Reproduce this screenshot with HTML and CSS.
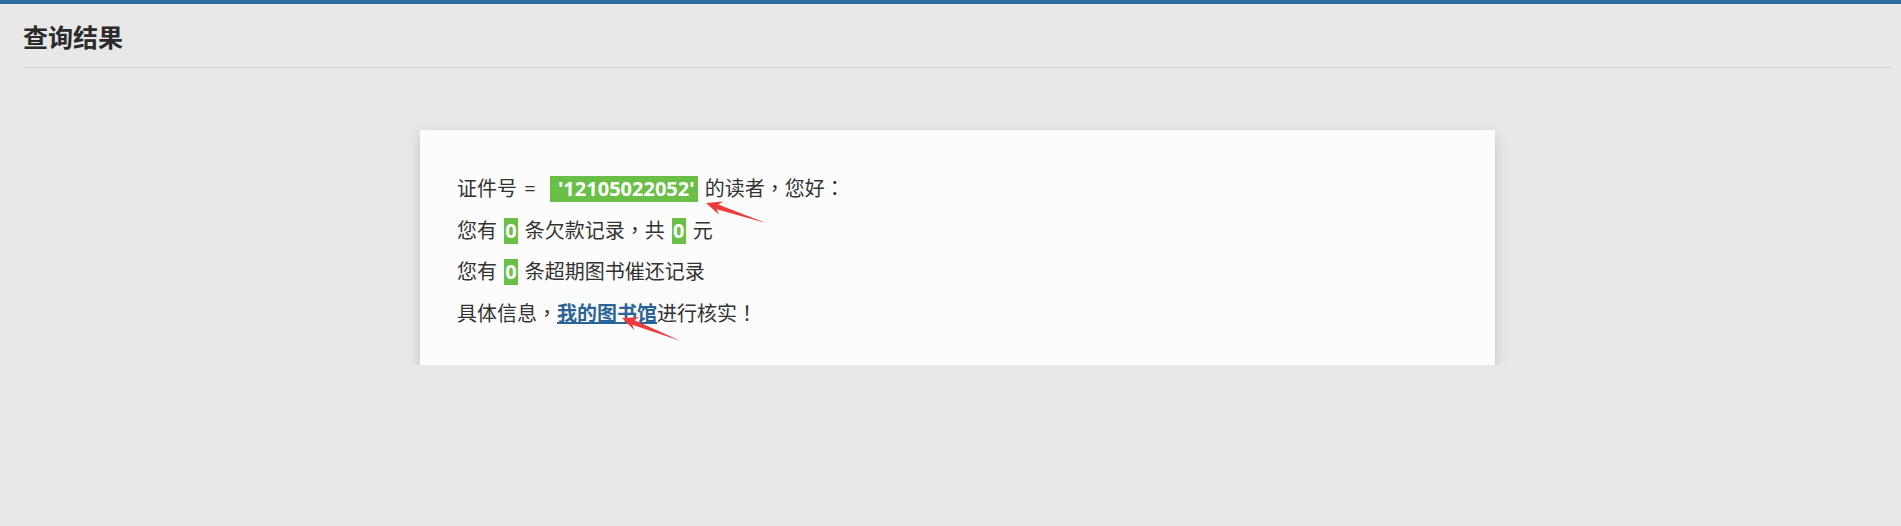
FILE: index.html
```html
<!DOCTYPE html>
<html lang="zh-CN">
<head>
<meta charset="utf-8" />
<title>查询结果</title>
<link rel="stylesheet" href="styles.css">
</head>
<body>
<div class="page">
	<div class="title">查询结果</div>

	<div class="result">
		<div class="line">证件号 = &nbsp;<span class="num id">'12105022052'</span> 的读者<span class="p" lang="zh-TW">，</span>您好<span class="p" lang="zh-TW">：</span></div>
		<div class="line">您有 <span class="num">0</span> 条欠款记录<span class="p" lang="zh-TW">，</span>共 <span class="num">0</span> 元</div>
		<div class="line">您有 <span class="num">0</span> 条超期图书催还记录</div>
		<div class="line">具体信息<span class="p" lang="zh-TW">，</span><a href="#" class="lib">我的图书馆</a>进行核实<span class="p" lang="zh-TW">！</span></div>

		<svg class="marks" width="1075" height="235" viewBox="0 0 1075 235">
			<polygon transform="translate(286,73)" points="0,0 17.4,-1.6 12.2,1.4 59.8,19.9 10.6,6.2 13,11.7" />
			<polygon transform="translate(202,188)" points="0,0 17.5,-0.7 12.1,2 58.7,22.9 10.3,6.7 12.4,12.3" />
		</svg>
	</div>
</div>
</body>
</html>
```

FILE: styles.css
```css
body {
	margin: 0px;
	background: #e8e8e8;
	border-top: 4px solid #2c6ea0;
	font-family: "Noto Sans", "Noto Sans CJK SC", sans-serif;
	color: #333;
}

div.page {
	padding: 0px 9px 0px 23px;
}

div.title {
	font-family: "Noto Sans CJK SC", sans-serif;
	font-size: 25px;
	font-weight: bold;
	line-height: 36px;
	padding-top: 14px;
	padding-bottom: 13px;
	border-bottom: 1px solid #d4d4d4;
	color: #2b2b2b;
}

div.result {
	position: relative;
	width: 1075px;
	height: 235px;
	box-sizing: border-box;
	margin: 62px auto 0px auto;
	padding: 37px 37px 0px 37px;
	background: #fcfcfc;
	box-shadow: 0px 5px 12px rgba(0, 0, 0, 0.17);
	font-size: 20px;
	line-height: 41px;
	word-spacing: 2px;
}

span.p {
	font-family: "Noto Sans CJK TC", sans-serif;
}

span.num {
	display: inline-block;
	line-height: 26px;
	padding: 0px 1px;
	background: #6abf47;
	color: #fff;
	font-weight: bold;
}

span.id {
	padding: 0px 3px 0px 8px;
}

a.lib {
	color: #2a6496;
	font-weight: bold;
	font-family: "Noto Sans CJK SC", sans-serif;
}

svg.marks {
	position: absolute;
	left: 0px;
	top: 0px;
	pointer-events: none;
}

svg.marks polygon {
	fill: #ef3b3b;
}
```
